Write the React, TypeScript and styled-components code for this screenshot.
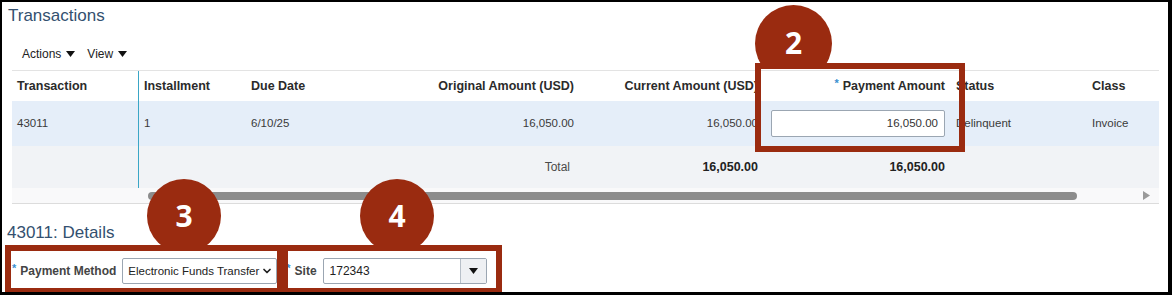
import React from 'react';
import styled, {createGlobalStyle} from 'styled-components';
import {ChevronDown} from 'lucide-react';

const GlobalStyle = createGlobalStyle`
    * { box-sizing: border-box; }
    body {
        margin: 0;
        background: #fff;
        font-family: "Liberation Sans", Arial, sans-serif;
    }
`

const MARK = '#9a2b10';

const columns = [
    {title: 'Transaction', width: 126, align: 'left'},
    {title: 'Installment', width: 108, align: 'left'},
    {title: 'Due Date', width: 100, align: 'left'},
    {title: 'Original Amount (USD)', width: 234, align: 'right'},
    {title: 'Current Amount (USD)', width: 184, align: 'right'},
    {title: 'Payment Amount', width: 187, align: 'right', required: true},
    {title: 'Status', width: 136, align: 'left'},
    {title: 'Class', width: 72, align: 'left'},
] as const;

const Caret = () => (
    <svg width="9" height="6" viewBox="0 0 9 6">
        <path d="M0 0 L9 0 L4.5 6 Z" fill="#111"/>
    </svg>
);

export default function App() {
    return (
        <>
            <GlobalStyle/>
            <Frame>
                <PanelTitle>Transactions</PanelTitle>
                <Toolbar>
                    <MenuButton>Actions <Caret/></MenuButton>
                    <MenuButton>View <Caret/></MenuButton>
                </Toolbar>

                <Table>
                    {columns.map((c, i) => (
                        <HeadCell key={c.title} $align={c.align} $divider={i === 1}>
                            {'required' in c && <Req>*</Req>}
                            {c.title}
                        </HeadCell>
                    ))}

                    <Cell $row="data">43011</Cell>
                    <Cell $row="data" $divider>1</Cell>
                    <Cell $row="data">6/10/25</Cell>
                    <Cell $row="data" $align="right">16,050.00</Cell>
                    <Cell $row="data" $align="right">16,050.00</Cell>
                    <Cell $row="data" $align="right">
                        <AmountInput>16,050.00</AmountInput>
                    </Cell>
                    <Cell $row="data">Delinquent</Cell>
                    <Cell $row="data">Invoice</Cell>

                    <Cell $row="total"/>
                    <Cell $row="total" $divider/>
                    <Cell $row="total"/>
                    <Cell $row="total" $align="right"><TotalLabel>Total</TotalLabel></Cell>
                    <Cell $row="total" $align="right" $bold>16,050.00</Cell>
                    <Cell $row="total" $align="right" $bold>16,050.00</Cell>
                    <Cell $row="total"/>
                    <Cell $row="total"/>
                </Table>

                <ScrollBar>
                    <Thumb/>
                    <ScrollArrow>
                        <svg width="7" height="9" viewBox="0 0 7 9">
                            <path d="M0 0 L7 4.5 L0 9 Z" fill="#9a9a9a"/>
                        </svg>
                    </ScrollArrow>
                </ScrollBar>

                <DetailsTitle>43011: Details</DetailsTitle>

                <FormRow>
                    <Field>
                        <Label><Req>*</Req>Payment Method</Label>
                        <SelectBox $width={155}>
                            <SelectText>Electronic Funds Transfer</SelectText>
                            <ChevronDown size={12} strokeWidth={3.5} color="#222"/>
                        </SelectBox>
                    </Field>
                    <Field>
                        <Label><Req>*</Req>Site</Label>
                        <Combo>
                            <ComboText>172343</ComboText>
                            <ComboButton><Caret/></ComboButton>
                        </Combo>
                    </Field>
                </FormRow>

                <Badge $left={753} $top={3} $size={77} $cut={19}>2</Badge>
                <Badge $left={145} $top={177} $size={74} $cut={8}>3</Badge>
                <Badge $left={358} $top={177} $size={74} $cut={8}>4</Badge>

                <Callout $left={753} $top={61} $width={210} $height={89}/>
                <Callout $left={3} $top={243} $width={278} $height={49}/>
                <Callout $left={280} $top={243} $width={220} $height={49}/>
            </Frame>
        </>
    );
}

const Frame = styled.div`
    position: relative;
    width: 1172px;
    height: 295px;
    overflow: hidden;
    border-style: solid;
    border-color: #000;
    border-width: 2px 4px 3px 2px;
    background: #fff;
    color: #333;
`

const PanelTitle = styled.h2`
    margin: 0;
    padding: 3px 0 0 6px;
    height: 28px;
    font-size: 17px;
    line-height: 22px;
    font-weight: 400;
    color: #33506f;
`

const Toolbar = styled.div`
    display: flex;
    gap: 12px;
    align-items: center;
    margin: 14px 0 0 20px;
    height: 20px;
`

const MenuButton = styled.div`
    display: flex;
    align-items: center;
    gap: 5px;
    font-size: 12px;
    color: #222;
`

const Table = styled.div`
    display: grid;
    grid-template-columns: ${columns.map(c => c.width + 'px').join(' ')};
    grid-template-rows: 30px 45px 42px;
    margin: 6px 0 0 10px;
    width: 1147px;
    border-top: 1px solid #e3e3e3;
`

const HeadCell = styled.div<{ $align: string; $divider?: boolean }>`
    display: flex;
    align-items: center;
    justify-content: ${p => p.$align === 'right' ? 'flex-end' : 'flex-start'};
    padding: 0 6px 0 5px;
    font-size: 12.5px;
    font-weight: 700;
    color: #2b2b2b;
    white-space: nowrap;
    border-left: ${p => p.$divider ? '1px solid #3aa6c6' : 'none'};
`

const Cell = styled.div<{ $row: 'data' | 'total'; $align?: string; $divider?: boolean; $bold?: boolean }>`
    display: flex;
    align-items: center;
    justify-content: ${p => p.$align === 'right' ? 'flex-end' : 'flex-start'};
    padding: 0 6px 1px 5px;
    background: ${p => p.$row === 'data' ? '#e5eef9' : '#f1f3f6'};
    border-left: ${p => p.$divider ? '1px solid #3aa6c6' : 'none'};
    font-size: ${p => p.$bold ? '12.5px' : '11.5px'};
    font-weight: ${p => p.$bold ? 700 : 400};
    color: ${p => p.$bold ? '#222' : '#3a3a3a'};
    white-space: nowrap;
`

const TotalLabel = styled.span`
    font-size: 12px;
    color: #4a4a4a;
    padding-right: 4px;
`

const Req = styled.span`
    color: #3b8fd0;
    font-weight: 700;
    font-size: 11px;
    margin-right: 4px;
    position: relative;
    top: -3px;
`

const AmountInput = styled.div`
    width: 174px;
    height: 27px;
    display: flex;
    align-items: center;
    justify-content: flex-end;
    padding-right: 6px;
    background: #fff;
    border: 1px solid #9ba6b2;
    border-radius: 2px;
    font-size: 11.5px;
    color: #333;
`

const ScrollBar = styled.div`
    margin-left: 10px;
    width: 1147px;
    height: 16px;
    background: #f9f9fa;
    border-bottom: 1px solid #dcdcdc;
    display: flex;
    align-items: center;
`

const Thumb = styled.div`
    margin-left: 136px;
    width: 929px;
    height: 8px;
    border-radius: 4px;
    background: #8c8c8c;
`

const ScrollArrow = styled.div`
    margin-left: auto;
    margin-right: 9px;
    display: flex;
`

const DetailsTitle = styled.h3`
    margin: 17px 0 0 5px;
    height: 24px;
    font-size: 17px;
    line-height: 24px;
    font-weight: 400;
    color: #33506f;
`

const FormRow = styled.div`
    display: flex;
    align-items: center;
    gap: 9px;
    margin: 13px 0 0 10px;
    height: 26px;
`

const Field = styled.div`
    display: flex;
    align-items: center;
    gap: 6px;
`

const Label = styled.label`
    display: flex;
    align-items: center;
    font-size: 12px;
    font-weight: 700;
    color: #444;
    white-space: nowrap;
`

const SelectBox = styled.div<{ $width: number }>`
    width: ${p => p.$width}px;
    height: 26px;
    display: flex;
    align-items: center;
    padding: 0 3px 0 5px;
    border: 1px solid #9ba6b2;
    border-radius: 2px;
    background: #fff;
    overflow: hidden;
`

const SelectText = styled.span`
    flex: 1;
    white-space: nowrap;
    font-size: 11.5px;
    color: #222;
`

const Combo = styled.div`
    display: flex;
    height: 26px;
    width: 164px;
    border: 1px solid #9ba6b2;
    border-radius: 2px;
    background: #fff;
`

const ComboText = styled.span`
    flex: 1;
    display: flex;
    align-items: center;
    padding-left: 6px;
    font-size: 12px;
    color: #222;
`

const ComboButton = styled.span`
    width: 26px;
    display: flex;
    align-items: center;
    justify-content: center;
    border-left: 1px solid #b7bfc8;
    background: #eef0f3;
`

const Badge = styled.div<{ $left: number; $top: number; $size: number; $cut: number }>`
    position: absolute;
    left: ${p => p.$left}px;
    top: ${p => p.$top}px;
    width: ${p => p.$size}px;
    height: ${p => p.$size}px;
    border-radius: 50%;
    background: ${MARK};
    clip-path: inset(0 0 ${p => p.$cut}px 0);
    display: flex;
    align-items: center;
    justify-content: center;
    padding-bottom: 2px;
    color: #fff;
    font-family: "Open Sans", "Noto Sans", sans-serif;
    font-weight: 700;
    font-size: 30px;
`

const Callout = styled.div<{ $left: number; $top: number; $width: number; $height: number }>`
    position: absolute;
    left: ${p => p.$left}px;
    top: ${p => p.$top}px;
    width: ${p => p.$width}px;
    height: ${p => p.$height}px;
    border: 6px solid ${MARK};
    pointer-events: none;
`
